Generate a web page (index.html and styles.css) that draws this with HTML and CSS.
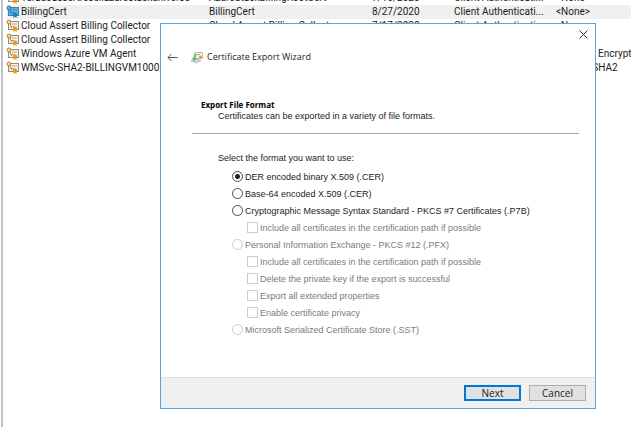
FILE: index.html
```html
<!DOCTYPE html>
<html lang="en">
<head>
<meta charset="utf-8">
<title>Certificates</title>
<link rel="stylesheet" href="styles.css">
</head>
<body>
<svg class="defs" width="0" height="0" aria-hidden="true">
  <symbol id="cert" viewBox="0 0 14 13">
    <rect class="paper" x="2.5" y="2.5" width="10" height="8"/>
    <path class="lines" d="M6 5h5M5 7.500h3"/>
    <path class="seal" d="M8 10l-1 3 2-1 2 1-1-3z"/>
    <circle class="seal" cx="9" cy="9.500" r="2.200"/>
    <path class="key" d="M4 4l1.500 5"/>
    <circle class="key" cx="3" cy="3" r="2"/>
  </symbol>
</svg>
<main class="console">
  <table class="certs">
    <colgroup><col class="c-name"><col class="c-issuer"><col class="c-date"><col class="c-use"><col></colgroup>
    <tbody>
      <tr><td><svg class="cert"><use href="#cert"/></svg>Teradoassertresellazurestackuniverse</td><td>AzureStackBillingRootCert</td><td>7/16/2020</td><td>Client Authenticati...</td><td>&lt;None&gt;</td></tr>
      <tr class="selected"><td><svg class="cert"><use href="#cert"/></svg>BillingCert</td><td>BillingCert</td><td>8/27/2020</td><td>Client Authenticati...</td><td>&lt;None&gt;</td></tr>
      <tr><td><svg class="cert"><use href="#cert"/></svg>Cloud Assert Billing Collector</td><td>Cloud Assert Billing Collector</td><td>7/17/2020</td><td>Client Authenticati...</td><td>&lt;None&gt;</td></tr>
      <tr><td><svg class="cert"><use href="#cert"/></svg>Cloud Assert Billing Collector</td><td></td><td></td><td></td><td></td></tr>
      <tr><td><svg class="cert"><use href="#cert"/></svg>Windows Azure VM Agent</td><td></td><td></td><td></td><td class="tail">Encrypt</td></tr>
      <tr><td><svg class="cert"><use href="#cert"/></svg>WMSvc-SHA2-BILLINGVM1000</td><td></td><td></td><td></td><td>WMSvc-SHA2</td></tr>
    </tbody>
  </table>
</main>

<form class="wizard" role="dialog" aria-labelledby="wizard-title">
  <div class="titlebar">
    <button type="button" class="close" aria-label="Close"><svg width="9" height="9" viewBox="0 0 9 9"><path d="M.5.500l8 8M8.500.500l-8 8"/></svg></button>
  </div>
  <header class="caption">
    <button type="button" class="back" aria-label="Back"><svg width="11" height="9" viewBox="0 0 11 9"><path d="M10.500 4.500H1M4.500 1L1 4.500 4.500 8"/></svg></button>
    <svg class="logo" width="14" height="13" viewBox="0 0 14 13">
      <path d="M4.500 1.500h8v6h-8z" fill="#f3f0ea" stroke="#c2beb5"/>
      <path d="M7 3.500h3" stroke="#aaa"/>
      <circle cx="10.500" cy="6" r="1.500" fill="#e39b26"/>
      <path d="M1 10l5-2 5 1.500-4.500 2.500z" fill="#d6dadc" stroke="#9ba1a5" stroke-width=".6"/>
      <path d="M7 3C4.500 3 3.500 5 3.500 7H1.500l3 3L7 7H5.500C5.500 5.500 6 4.500 7 3z" fill="#4fbd56"/>
    </svg>
    <h1 id="wizard-title">Certificate Export Wizard</h1>
  </header>
  <section class="intro">
    <h2>Export File Format</h2>
    <p>Certificates can be exported in a variety of file formats.</p>
  </section>
  <fieldset class="formats">
    <legend>Select the format you want to use:</legend>
    <label><input type="radio" name="format" checked>DER encoded binary X.509 (.CER)</label>
    <label><input type="radio" name="format">Base-64 encoded X.509 (.CER)</label>
    <label><input type="radio" name="format">Cryptographic Message Syntax Standard - PKCS #7 Certificates (.P7B)</label>
    <label class="sub off"><input type="checkbox" disabled>Include all certificates in the certification path if possible</label>
    <label class="off"><input type="radio" name="format" disabled>Personal Information Exchange - PKCS #12 (.PFX)</label>
    <label class="sub off"><input type="checkbox" disabled>Include all certificates in the certification path if possible</label>
    <label class="sub off"><input type="checkbox" disabled>Delete the private key if the export is successful</label>
    <label class="sub off"><input type="checkbox" disabled>Export all extended properties</label>
    <label class="sub off"><input type="checkbox" disabled>Enable certificate privacy</label>
    <label class="off"><input type="radio" name="format" disabled>Microsoft Serialized Certificate Store (.SST)</label>
  </fieldset>
  <footer class="actions">
    <button type="submit" class="btn primary">Next</button>
    <button type="button" class="btn">Cancel</button>
  </footer>
</form>
</body>
</html>
```
FILE: styles.css
```css
* { box-sizing: border-box; }
body {
  margin: 0;
  background: #fff;
  color: #1c1c1c;
  font: 10px/14px Roboto, "Open Sans", sans-serif;
}
.defs { position: absolute; }

.console {
  min-height: 100vh;
  margin-left: 1px;
  border-left: 2px solid #c0c1c9;
  padding-left: 3px;
  overflow: hidden;
}
.certs {
  width: 100%;
  margin-top: -9px;
  border-collapse: collapse;
  table-layout: fixed;
}
.c-name { width: 203px; }
.c-issuer { width: 163px; }
.c-date { width: 82px; }
.c-use { width: 102px; }
.certs td { height: 14px; padding: 0; white-space: nowrap; }
.certs .tail { padding-left: 42px; }
.certs .selected { background: #f0f0f0; }
.cert {
  width: 14px;
  height: 13px;
  margin-right: 1px;
  vertical-align: top;
}
.paper { fill: var(--paper, #f9f4eb); stroke: var(--edge, #8e8a86); }
.lines { stroke: var(--edge, #a9a49c); }
.seal { fill: var(--seal, #e3a01b); }
.key { fill: var(--paper, #f6d68a); stroke: var(--key, #b9852b); }
.selected {
  --paper: #62b4e6;
  --edge: #2f86bd;
  --seal: #2a7cb0;
  --key: #3b7790;
}

.wizard {
  position: absolute;
  top: 23px;
  left: 160px;
  width: 436px;
  border: 1px solid #5aa5e0;
  background: #fff;
  font: 9px/12px "Liberation Sans", Arial, sans-serif;
}
.wizard button svg { display: block; fill: none; stroke: currentColor; }
.titlebar { display: flex; justify-content: flex-end; padding: 6px 7px 0; }
.close, .back { padding: 0; border: 0; background: none; color: #333; }
.back { color: #555; }
.caption { display: flex; align-items: center; padding: 10px 7px 0 6px; }
.logo { margin: 0 3px 0 12px; }
h1 { margin: 0; font: 9px/16px "Open Sans", "Noto Sans", sans-serif; }
.intro {
  margin: 34px 16px 0 31px;
  padding: 0 0 11px 9px;
  border-bottom: 1px solid #a8a8a8;
}
h2 { margin: 0; font: bold 8px/11px "Open Sans", "Noto Sans", sans-serif; color: #000; }
.intro p { margin: 0 0 0 17px; }
.formats {
  display: flex;
  flex-direction: column;
  margin: 18px 17px 0 57px;
  padding: 0;
  border: 0;
}
legend { padding: 0; margin-bottom: 4px; }
.formats label {
  display: flex;
  align-items: center;
  height: 17px;
  margin-left: 14px;
  white-space: nowrap;
}
.formats .sub { margin-left: 29px; }
.formats .off { color: #7b7b7b; }
.formats input {
  appearance: none;
  width: 11px;
  height: 11px;
  margin: 0 2px 0 0;
  border: 1px solid #4a4a4a;
  background: #fff;
}
.formats input[type="radio"] { border-radius: 50%; }
.formats input:checked { background: radial-gradient(circle, #222 0 2px, #fff 3px); }
.formats input:disabled { border-color: #ccc; }
.actions {
  display: flex;
  justify-content: flex-end;
  gap: 8px;
  margin-top: 39px;
  padding: 7px 9px;
  border-top: 1px solid #dfdfdf;
  background: #f0f0f0;
}
.btn {
  width: 57px;
  height: 16px;
  padding: 0;
  border: 1px solid #adadad;
  background: #e1e1e1;
  color: #1c1c1c;
  font: 10px/12px "Open Sans", "Noto Sans", sans-serif;
}
.primary { border: 2px solid #0078d7; }
```
